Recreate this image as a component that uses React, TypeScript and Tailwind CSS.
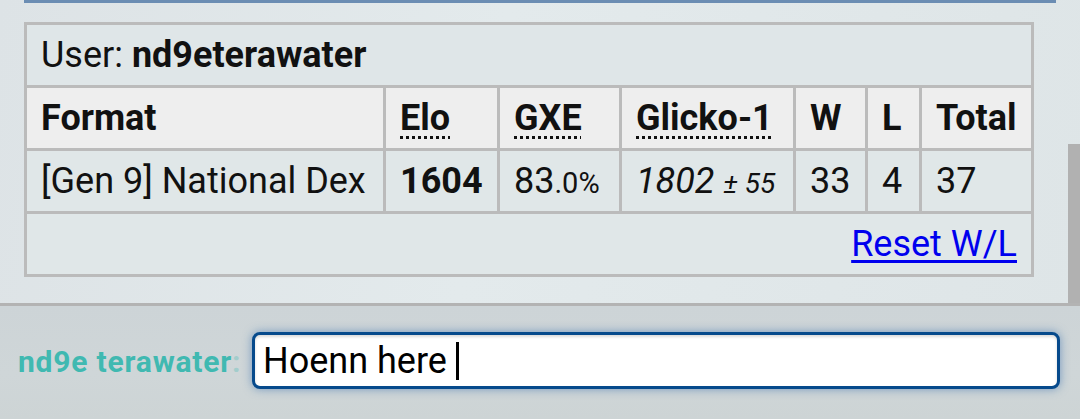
import React from 'react';

interface LadderRow {
  format: string;
  elo: string;
  gxe: string;
  gxeSmall: string;
  glicko: string;
  glickoDev: string;
  w: string;
  l: string;
  total: string;
}

const row: LadderRow = {
  format: '[Gen 9] National Dex',
  elo: '1604',
  gxe: '83',
  gxeSmall: '.0%',
  glicko: '1802',
  glickoDev: '± 55',
  w: '33',
  l: '4',
  total: '37',
};

const cell = 'h-[60px] flex items-center pl-[14px] pr-[14px] whitespace-nowrap';

const App: React.FC = () => {
  return (
    <div className="relative w-[1080px] h-[419px] overflow-hidden bg-[#dfe6e8] font-['Roboto',sans-serif] text-[#111]">
      {/* scrolling panel */}
      <div className="h-[303px] bg-[linear-gradient(100deg,#dde3e6_0%,#e3eaec_45%,#dee5e7_100%)]">
        {/* bottom edge of the previous box */}
        <div className="ml-[24px] w-[1032px] h-[3px] bg-[#6b8db3]" />

        <div className="mt-[19px] ml-[24px] w-[1010px] grid grid-cols-[356px_111px_119px_171px_69px_51px_109px] gap-[3px] p-[3px] bg-[#bbbbbb] text-[36px]">
          <div className={`${cell} col-span-7 bg-[#dfe6e8]`}>
            User:&nbsp;<strong className="font-bold">nd9eterawater</strong>
          </div>

          <div className={`${cell} bg-[#eeeeee] font-bold`}>Format</div>
          <div className={`${cell} bg-[#eeeeee] font-bold`}>
            <span className="underline decoration-dotted decoration-[3px] underline-offset-[6px]">Elo</span>
          </div>
          <div className={`${cell} bg-[#eeeeee] font-bold`}>
            <span className="underline decoration-dotted decoration-[3px] underline-offset-[6px]">GXE</span>
          </div>
          <div className={`${cell} bg-[#eeeeee] font-bold`}>
            <span className="underline decoration-dotted decoration-[3px] underline-offset-[6px]">Glicko-1</span>
          </div>
          <div className={`${cell} bg-[#eeeeee] font-bold`}>W</div>
          <div className={`${cell} bg-[#eeeeee] font-bold`}>L</div>
          <div className={`${cell} bg-[#eeeeee] font-bold`}>Total</div>

          <div className={`${cell} bg-[#e0e7e8]`}>{row.format}</div>
          <div className={`${cell} bg-[#e0e7e8] font-bold`}>{row.elo}</div>
          <div className={`${cell} bg-[#e0e7e8]`}>
            <span>
              {row.gxe}
              <span className="text-[29px]">{row.gxeSmall}</span>
            </span>
          </div>
          <div className={`${cell} bg-[#e0e7e8] italic`}>
            <span>
              {row.glicko} <span className="text-[28px]">{row.glickoDev}</span>
            </span>
          </div>
          <div className={`${cell} bg-[#e0e7e8]`}>{row.w}</div>
          <div className={`${cell} bg-[#e0e7e8]`}>{row.l}</div>
          <div className={`${cell} bg-[#e0e7e8]`}>{row.total}</div>

          <div className={`${cell} col-span-7 justify-end bg-[#e0e7e8]`}>
            <a href="#" className="text-[#0000ee] underline decoration-[3px] underline-offset-[4px]">
              Reset W/L
            </a>
          </div>
        </div>
      </div>

      {/* scrollbar */}
      <div className="absolute right-0 top-[144px] w-[12px] h-[159px] bg-[#b1b1b1]" />

      <div className="h-[3px] bg-[#b3b3b3]" />

      {/* chat box */}
      <div className="h-[113px] flex items-start bg-[linear-gradient(180deg,#cdd4d7_0%,#cfd6d8_60%,#cdd4d5_100%)]">
        <div className="mt-[33px] ml-[18px] w-[226px] whitespace-nowrap text-[30px] font-bold tracking-[0.8px] text-[#40b9b1]">
          nd9e terawater<span className="opacity-30">:</span>
        </div>
        <div className="mt-[26px] ml-[8px] w-[808px] h-[57px] flex items-center rounded-[8px] border-[3px] border-[#064a8c] bg-white pl-[8px] text-[36px] text-black shadow-[0_0_10px_rgba(40,100,170,0.55),inset_0_2px_3px_rgba(0,0,0,0.15)]">
          <span className="whitespace-pre">Hoenn here </span>
          <span className="w-[3px] h-[38px] bg-black" />
        </div>
      </div>
    </div>
  );
};

export default App;
